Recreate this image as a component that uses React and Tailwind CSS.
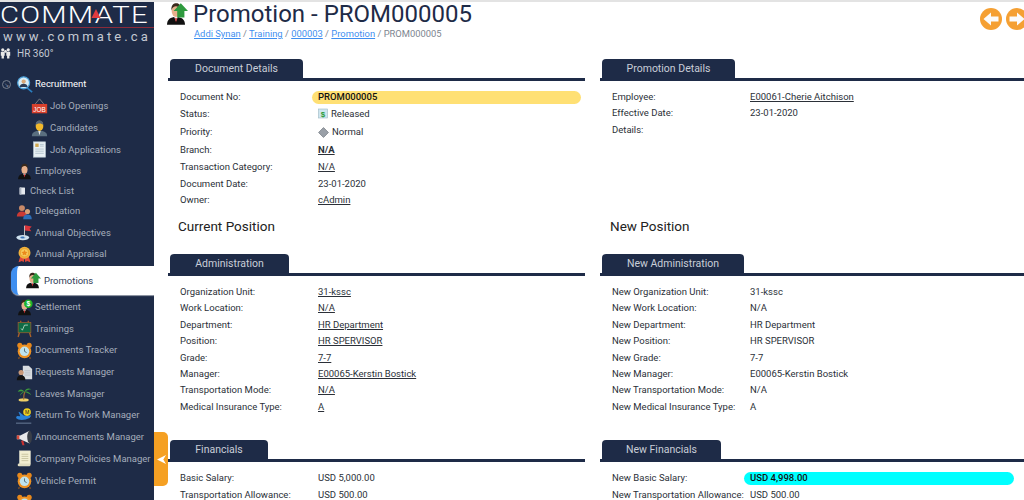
import React from "react";

// small drawn icons for the sidebar, all on a 20x20 box
const Person = ({ hair = "#3a2a1c", suit = "#111" }) => (
  <>
    <path d="M2.5 19c0-4.5 3-6.5 7.5-6.5s7.5 2 7.5 6.5z" fill={suit} />
    <path d="M8.5 12.5h3L10 16z" fill="#fff" />
    <path d="M10 13l-.8 1 .8 3 .8-3z" fill="#c22" />
    <ellipse cx="10" cy="7.5" rx="3.6" ry="5" fill="#e8b08c" />
    <path d="M6.2 7C5.8 2.5 8 1 10.4 1s3.8 2 3.4 5.5c-1-2.500-2.500-3-3.800-3-1.600 0-3.200 1-3.800 3.500z" fill={hair} />
  </>
);

const Clock = () => (
  <>
    <circle cx="4.5" cy="4" r="3" fill="#e8891c" />
    <circle cx="15.500" cy="4" r="3" fill="#e8891c" />
    <circle cx="10" cy="11" r="8" fill="#ee9223" />
    <circle cx="10" cy="11" r="5.600" fill="#bfe3ee" />
    <path d="M10 7.500V11l2.500 1.500" stroke="#44606c" strokeWidth="1" fill="none" />
    <path d="M4 18l-1 1.500M16 18l1 1.500" stroke="#b06010" strokeWidth="1.400" />
  </>
);

const icons = {
  recruit: (
    <>
      <path d="M13 14l6 5" stroke="#2a7fc0" strokeWidth="2" />
      <circle cx="9" cy="8" r="7" fill="#d8eef8" stroke="#4a9fd8" strokeWidth="1.500" />
      <circle cx="9" cy="6.500" r="2.500" fill="#d8a878" />
      <path d="M4.500 13c0-3 2-4 4.500-4s4.500 1 4.500 4z" fill="#2c3c55" />
    </>
  ),
  job: (
    <>
      <path d="M10 1L5 7M10 1l5 6" stroke="#888" strokeWidth="1" fill="none" />
      <rect x="1" y="7" width="18" height="11" fill="#d8402c" />
      <text x="10" y="16" textAnchor="middle" fontSize="7.500" fill="#fff" fontFamily="Liberation Sans">JOB</text>
    </>
  ),
  candidate: (
    <>
      <path d="M1 19c0-5 4-6.500 9-6.500s9 1.500 9 6.500z" fill="#5a6f80" />
      <path d="M8.500 12.500h3L10 18z" fill="#e8e8e8" />
      <ellipse cx="10" cy="7" rx="4.500" ry="6" fill="#f2b92c" />
      <path d="M5.500 6C5.500 1.500 8 .5 10 .5s4.500 1 4.500 5.500C13 3.500 7 3.500 5.500 6z" fill="#586878" />
    </>
  ),
  application: (
    <>
      <rect x="3" y="1" width="14" height="18" fill="#e8f0f4" stroke="#b8c8d0" strokeWidth=".8" />
      <rect x="5" y="3" width="4" height="4" fill="#d0a850" />
      <path d="M5 9.500h10M5 12h10M5 14.500h10M10.500 4h4.500M10.500 6h4.500" stroke="#9fb4c0" strokeWidth=".8" />
    </>
  ),
  employee: <Person />,
  check: (
    <>
      <rect x="6" y="4" width="9" height="12" rx="1" fill="#e6e9ee" />
      <rect x="6" y="4" width="3" height="12" fill="#aeb6c2" />
    </>
  ),
  delegation: (
    <>
      <circle cx="7" cy="6" r="3.500" fill="#c98a68" />
      <path d="M1 16c0-4 2.500-6 6-6s6 2 6 6z" fill="#cc3a34" />
      <circle cx="13.500" cy="10" r="3" fill="#d8a078" />
      <path d="M8.500 19c0-4 2-5.500 5-5.500s5 1.500 5 5.500z" fill="#2e6fb8" />
    </>
  ),
  objective: (
    <>
      <ellipse cx="8" cy="16" rx="7.500" ry="3" fill="#cfe2f0" />
      <ellipse cx="8" cy="16" rx="3" ry="1.200" fill="#3a74b8" />
      <path d="M10 16V2" stroke="#d8d8d8" strokeWidth="1" />
      <path d="M10.500 1.500l8 1.500-2.500 2.500 2 3-7.500-1z" fill="#d8343a" />
    </>
  ),
  appraisal: (
    <>
      <path d="M5 12l-2 7 4-1.500L9 19l1-5zM15 12l2 7-4-1.500L11 19l-1-5z" fill="#e0483a" />
      <circle cx="10" cy="8" r="7" fill="#f2b23a" />
      <circle cx="10" cy="8" r="4.800" fill="#f7c95c" stroke="#d98f1c" strokeWidth=".6" />
      <path d="M10 4.500l1.100 2.300 2.500.3-1.800 1.700.5 2.500-2.300-1.200-2.300 1.200.5-2.500-1.800-1.700 2.500-.3z" fill="#ea8a1c" />
    </>
  ),
  settlement: (
    <>
      <Person />
      <circle cx="14.500" cy="5.500" r="5" fill="#1eb52c" />
      <text x="14.500" y="8.500" textAnchor="middle" fontSize="8" fontWeight="700" fill="#fff" fontFamily="Liberation Sans">$</text>
    </>
  ),
  training: (
    <>
      <path d="M4 15l-1.500 5M16 15l1.500 5" stroke="#a8602a" strokeWidth="1.600" />
      <path d="M5 3l1-2M15 3l-1-2" stroke="#a8602a" strokeWidth="1.400" />
      <rect x="2.500" y="3" width="15" height="12" fill="#0f6b45" stroke="#a8602a" strokeWidth=".8" />
      <path d="M6 10l1.500 2L10 6h4" stroke="#cfe8d8" strokeWidth=".9" fill="none" />
    </>
  ),
  clock: <Clock />,
  requests: (
    <>
      <path d="M8 2h7l4 4v12H8z" fill="#d8dce0" />
      <path d="M10 8h7M10 10.500h7M10 13h7" stroke="#a8b0b8" strokeWidth=".8" />
      <circle cx="6" cy="10" r="3" fill="#c89878" />
      <path d="M1 19c0-4 2-5.500 5-5.500s5 1.500 5 5.500z" fill="#111" />
    </>
  ),
  leaves: (
    <>
      <ellipse cx="9" cy="17.500" rx="6" ry="2" fill="#efd068" />
      <path d="M9 17c0-4 .500-7 1.500-9" stroke="#9a6a30" strokeWidth="1.500" fill="none" />
      <path d="M10 8C7 4 4 5 2 8c3-1 5-1 8 0zM10 8c1-4 5-5 8-3-3 0-5 1-8 3zM10 8c3-1 6 0 8 4-3-2-5-3-8-4zM10 8c-3 0-5 2-5.500 5C6 10.500 8 9 10 8z" fill="#3c9a3c" />
    </>
  ),
  back: (
    <>
      <path d="M0 19h18" stroke="#8fa4bf" strokeWidth=".8" />
      <path d="M0 13c3 3 10 3 16 0l2-3H9L4 6 3 6l2 5-4-.5z" fill="#2a82d8" />
      <circle cx="13" cy="6" r="4.500" fill="#f0d020" />
      <text x="13" y="8.300" textAnchor="middle" fontSize="6" fill="#222" fontFamily="Liberation Sans">M</text>
    </>
  ),
  announce: (
    <>
      <path d="M6 14l1.500 5h2.500L8.500 13z" fill="#c83030" />
      <path d="M1 7.500h4L16 2v15L5 12H1z" fill="#e8e8ea" />
      <path d="M1 7.500h3v4.500H1z" fill="#d84a3a" />
      <ellipse cx="16" cy="9.500" rx="2.800" ry="7.300" fill="#3a3f48" />
    </>
  ),
  policy: (
    <>
      <rect x="4" y="1" width="13" height="16" fill="#f2eed2" stroke="#d8d8c8" strokeWidth=".6" />
      <path d="M6.500 5h8M6.500 7.500h8M6.500 10h8M6.500 12.500h8" stroke="#b8b48c" strokeWidth=".8" />
      <rect x="2" y="16" width="15" height="3" rx="1.500" fill="#e0dcc0" />
    </>
  ),
};

const Icon = ({ name, size = 18 }) => (
  <svg viewBox="0 0 20 20" width={size} height={size} className="shrink-0 overflow-visible">
    {icons[name]}
  </svg>
);

const Promote = ({ size = 18 }) => (
  <svg viewBox="0 0 20 20" width={size} height={size} className="shrink-0 overflow-visible">
    <Person />
    <path d="M14 1l6 6.500h-3V13h-6V7.500H8z" fill="#2e9a3e" />
  </svg>
);

const menu = [
  { label: "Job Openings", icon: "job", sub: true },
  { label: "Candidates", icon: "candidate", sub: true },
  { label: "Job Applications", icon: "application", sub: true },
  { label: "Employees", icon: "employee" },
  { label: "Check List", icon: "check", small: true },
  { label: "Delegation", icon: "delegation" },
  { label: "Annual Objectives", icon: "objective" },
  { label: "Annual Appraisal", icon: "appraisal" },
];

const menuAfter = [
  { label: "Settlement", icon: "settlement" },
  { label: "Trainings", icon: "training" },
  { label: "Documents Tracker", icon: "clock" },
  { label: "Requests Manager", icon: "requests" },
  { label: "Leaves Manager", icon: "leaves" },
  { label: "Return To Work Manager", icon: "back" },
  { label: "Announcements Manager", icon: "announce" },
  { label: "Company Policies Manager", icon: "policy" },
  { label: "Vehicle Permit", icon: "clock" },
  { label: "", icon: "clock" },
];

const MenuRow = ({ item }) => {
  let pad = "h-[21.7px] pl-[16px] gap-[2px]";
  if (item.sub) pad = "h-[21.7px] pl-[31px] gap-[2px]";
  if (item.small) pad = "h-[18px] pl-[16px] gap-[2px]";
  return (
    <div className={`flex shrink-0 items-center text-[9.5px] whitespace-nowrap text-[#a5adbb] ${pad}`}>
      <Icon name={item.icon} size={item.small ? 12 : 17} />
      <span>{item.label}</span>
    </div>
  );
};

const Sidebar = () => (
  <aside className="flex h-[500px] w-[154px] shrink-0 flex-col overflow-hidden bg-[#1e2b47]">
    <div className="relative flex h-[26px] shrink-0 items-end border-b border-[#8c2b3a] text-[24px] leading-[24px] font-light tracking-[1px] whitespace-nowrap text-white">
      <span className="origin-left scale-x-[1.22]">COMMATE</span>
      <svg viewBox="0 0 10 10" width="10" height="9" className="absolute top-[7px] left-[91px]">
        <path d="M5 0l5 10H0z" fill="#e03a3e" />
      </svg>
    </div>
    <div className="mt-[1px] shrink-0 text-center text-[13px] leading-[15px] tracking-[3.1px] whitespace-nowrap text-[#c4c9d2]">www.commate.ca</div>
    <div className="mt-[2px] flex h-[14px] shrink-0 items-center gap-[6px] text-[10px] text-[#c4c9d2]">
      <svg viewBox="0 0 14 14" width="11" height="14" className="shrink-0" fill="#e8e8e8">
        <circle cx="3.500" cy="3" r="2" />
        <circle cx="10.500" cy="3" r="2" />
        <circle cx="7" cy="5" r="1.800" />
        <path d="M1 5.500h5v5H5V14H2v-3.500H1zM8 5.500h5v5h-1V14H9v-3.500H8z" />
      </svg>
      <span>HR 360°</span>
    </div>
    <div className="mt-[13px] flex h-[22.5px] shrink-0 items-center pl-[2px] text-[9.5px] text-white">
      <div className="flex h-[9px] w-[9px] items-center justify-center rounded-full border border-[#77808f] text-[6px] text-[#8a93a3]">↘</div>
      <div className="ml-[5px]"><Icon name="recruit" size={17} /></div>
      <span className="ml-[2px]">Recruitment</span>
    </div>
    {menu.map((item) => (
      <MenuRow key={item.label} item={item} />
    ))}
    <div className="my-[1px] ml-[11px] flex h-[29px] shrink-0 items-center gap-[3px] rounded-l-[8px] border-l-[6px] border-[#3f8ff0] bg-white pl-[7px] text-[9.5px] text-[#2e3a55] shadow-[0_1px_1px_#9aa0ac]">
      <Promote size={17} />
      <span>Promotions</span>
    </div>
    {menuAfter.map((item, i) => (
      <MenuRow key={i} item={item} />
    ))}
  </aside>
);

const Tab = ({ title, width }) => (
  <div className="border-b-[3px] border-[#1e2b47] pl-[2px]">
    <div className={`flex h-[19px] items-center justify-center rounded-t-[4px] bg-[#1e2b47] text-[10.5px] text-[#c9ced8] ${width}`}>
      {title}
    </div>
  </div>
);

const Value = ({ row }) => {
  if (row.pill) {
    return (
      <div className={`flex h-[13px] flex-1 items-center rounded-full pl-[6px] font-medium text-[#111] ${row.pill}`}>{row.value}</div>
    );
  }
  if (row.icon) {
    return (
      <div className="flex items-center gap-[3px] pl-[6px]">
        {row.icon}
        <span>{row.value}</span>
      </div>
    );
  }
  return <span className={`pl-[6px] ${row.link ? "underline" : ""} ${row.bold ? "font-bold" : ""}`}>{row.value}</span>;
};

const Fields = ({ rows, rowH = "h-[16.4px]", className = "" }) => (
  <div className={`pl-[12px] text-[9.500px] text-[#2b3038] ${className}`}>
    {rows.map((row) => (
      <div key={row.label} className={`flex items-center ${row.h || rowH}`}>
        <div className="w-[132px] shrink-0 whitespace-nowrap">{row.label}</div>
        <Value row={row} />
      </div>
    ))}
  </div>
);

const released = (
  <svg viewBox="0 0 10 10" width="10" height="11" className="mb-[2px]">
    <rect x=".5" y=".5" width="9" height="9" fill="#cfe6f0" stroke="#9db8c4" strokeWidth=".6" />
    <text x="5" y="8" textAnchor="middle" fontSize="8" fontWeight="700" fill="#2a9a3a" fontFamily="Liberation Sans">$</text>
  </svg>
);

const normal = (
  <svg viewBox="0 0 10 10" width="11" height="11">
    <path d="M5 .5L9.500 5 5 9.500.5 5z" fill="#9aa0a8" stroke="#6c727a" strokeWidth=".6" />
  </svg>
);

const docRows = [
  { label: "Document No:", value: "PROM000005", pill: "bg-[#ffe074]", h: "h-[17px]" },
  { label: "Status:", value: "Released", icon: released, h: "h-[17px]" },
  { label: "Priority:", value: "Normal", icon: normal, h: "h-[18.500px]" },
  { label: "Branch:", value: "N/A", link: true, bold: true, h: "h-[18px]" },
  { label: "Transaction Category:", value: "N/A", link: true, h: "h-[16px]" },
  { label: "Document Date:", value: "23-01-2020", h: "h-[16.500px]" },
  { label: "Owner:", value: "cAdmin", link: true, h: "h-[17px]" },
];

const promoRows = [
  { label: "Employee:", value: "E00061-Cherie Aitchison", link: true },
  { label: "Effective Date:", value: "23-01-2020" },
  { label: "Details:", value: "" },
];

const adminRows = [
  { label: "Organization Unit:", value: "31-kssc", link: true },
  { label: "Work Location:", value: "N/A", link: true },
  { label: "Department:", value: "HR Department", link: true },
  { label: "Position:", value: "HR SPERVISOR", link: true },
  { label: "Grade:", value: "7-7", link: true },
  { label: "Manager:", value: "E00065-Kerstin Bostick", link: true },
  { label: "Transportation Mode:", value: "N/A", link: true },
  { label: "Medical Insurance Type:", value: "A", link: true },
];

const newAdminRows = [
  { label: "New Organization Unit:", value: "31-kssc" },
  { label: "New Work Location:", value: "N/A" },
  { label: "New Department:", value: "HR Department" },
  { label: "New Position:", value: "HR SPERVISOR" },
  { label: "New Grade:", value: "7-7" },
  { label: "New Manager:", value: "E00065-Kerstin Bostick" },
  { label: "New Transportation Mode:", value: "N/A" },
  { label: "New Medical Insurance Type:", value: "A" },
];

const finRows = [
  { label: "Basic Salary:", value: "USD 5,000.00" },
  { label: "Transportation Allowance:", value: "USD 500.00" },
];

const newFinRows = [
  { label: "New Basic Salary:", value: "USD 4,998.00", pill: "bg-[#00ffff]" },
  { label: "New Transportation Allowance:", value: "USD 500.00" },
];

const Crumb = ({ children }) => <span className="text-[#3f8ff0] underline">{children}</span>;

const NavButton = ({ dir }) => (
  <svg viewBox="0 0 22 22" width="22" height="22">
    <circle cx="11" cy="11" r="11" fill="#f5a033" />
    <path d={dir === "left" ? "M3.500 11L11 4.500V8.500h7.500v5H11v4z" : "M18.500 11L11 4.500V8.500H3.500v5H11v4z"} fill="#fbfbfb" />
  </svg>
);

const App = () => (
  <div className="relative flex h-[500px] w-[1024px] overflow-hidden border-t-[2px] border-[#e3e3e3] bg-white font-['Roboto','Liberation_Sans',sans-serif]">
    <Sidebar />
    <main className="min-w-0 flex-1 pl-[14px]">
      {/* title bar */}
      <div className="flex h-[57px] items-start">
        <div className="ml-[-4px] flex-1">
          <div className="flex items-center gap-[5px]">
            <Promote size={24} />
            <h1 className="text-[24px] leading-[22px] font-normal text-[#1e2b47]">Promotion - PROM000005</h1>
          </div>
          <div className="mt-[2px] pl-[30px] text-[9.400px] leading-[12px] text-[#7d8590]">
            <Crumb>Addi Synan</Crumb> / <Crumb>Training</Crumb> / <Crumb>000003</Crumb> / <Crumb>Promotion</Crumb> / PROM000005
          </div>
        </div>
        <div className="mt-[6px] mr-[-4px] flex gap-[4px]">
          <NavButton dir="left" />
          <NavButton dir="right" />
        </div>
      </div>

      <div className="grid grid-cols-[417px_424px] gap-x-[15px] pr-[4px]">
        <div>
          <Tab title="Document Details" width="w-[133px]" />
          <Fields rows={docRows} className="mt-[8px] pr-[4px]" />
        </div>
        <div>
          <Tab title="Promotion Details" width="w-[133px]" />
          <Fields rows={promoRows} className="mt-[8px]" />
        </div>

        <h2 className="mt-[8px] h-[37px] pl-[10px] text-[13.500px] leading-[18px] text-[#222]">Current Position</h2>
        <h2 className="mt-[8px] h-[37px] pl-[10px] text-[13.500px] leading-[18px] text-[#222]">New Position</h2>

        <div>
          <Tab title="Administration" width="w-[119px]" />
          <Fields rows={adminRows} className="mt-[8px] pr-[4px]" />
        </div>
        <div>
          <Tab title="New Administration" width="w-[142px]" />
          <Fields rows={newAdminRows} className="mt-[8px]" />
        </div>

        <div className="mt-[25px]">
          <Tab title="Financials" width="w-[98px]" />
          <Fields rows={finRows} className="mt-[8px]" />
        </div>
        <div className="mt-[25px]">
          <Tab title="New Financials" width="w-[119px]" />
          <Fields rows={newFinRows} className="mt-[8px] pr-[10px]" />
        </div>
      </div>
    </main>

    {/* collapse handle over the sidebar edge */}
    <div className="absolute top-[430px] left-[154px] flex h-[54px] w-[14px] items-center justify-center rounded-r-[5px] bg-[#f5a023]">
      <svg viewBox="0 0 10 10" width="9" height="9">
        <path d="M0 5L10 0 7 5l3 5z" fill="#fff" />
      </svg>
    </div>
  </div>
);

export default App;
